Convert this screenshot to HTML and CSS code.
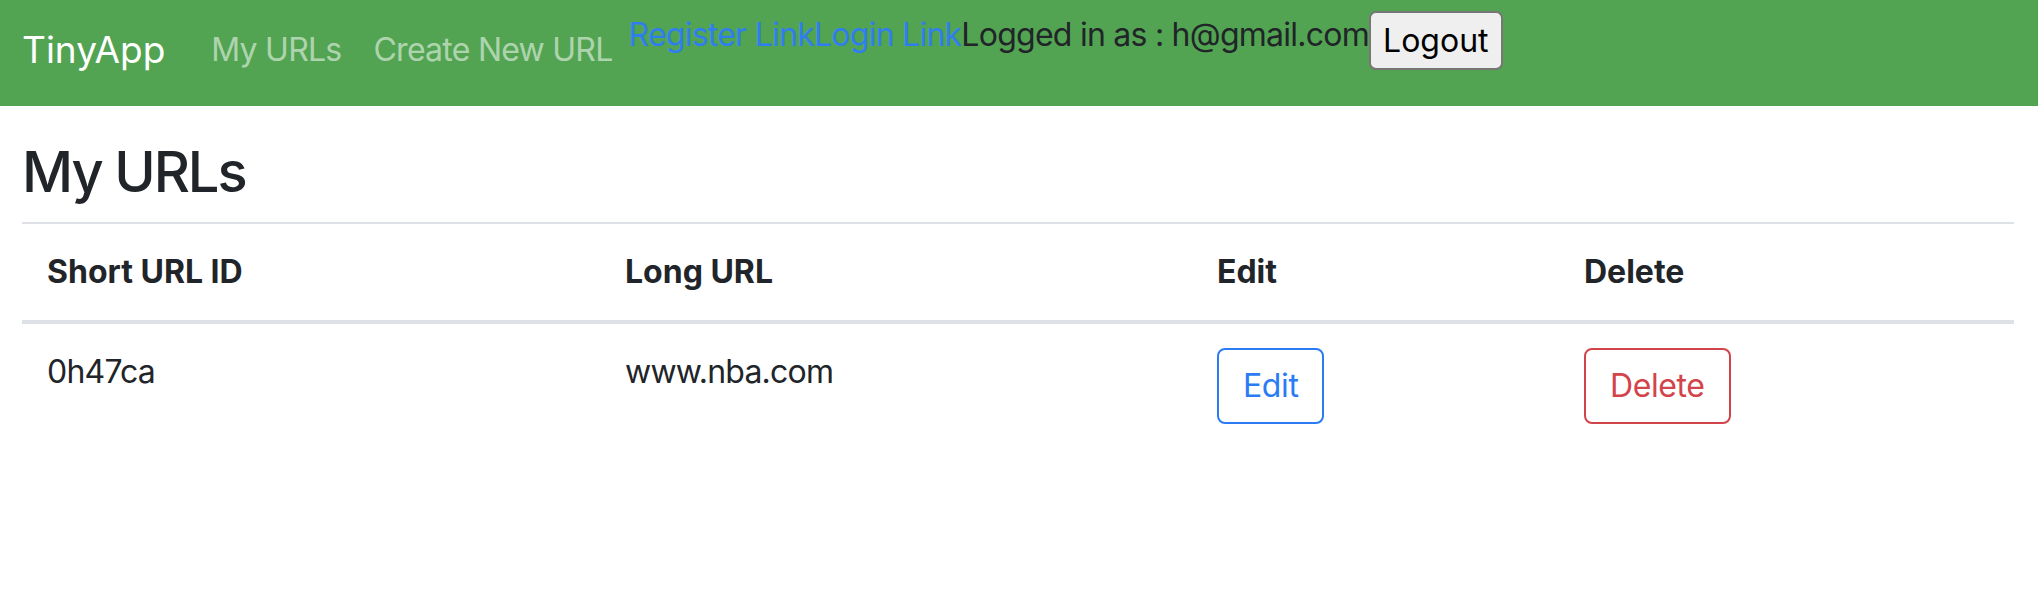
FILE: index.html
```html
<!DOCTYPE html>
<html lang="en">
<head>
<meta charset="utf-8">
<title>TinyApp</title>
<link rel="stylesheet" href="styles.css">
</head>
<body>
<nav class="navbar">
  <a class="brand" href="#">TinyApp</a>
  <ul class="nav-links">
    <li><a class="nav-link" href="#">My URLs</a></li>
    <li><a class="nav-link" href="#">Create New URL</a></li>
  </ul>
  <div class="nav-extra">
    <span class="auth-text"><a class="auth-link" href="#">Register Link</a><a class="auth-link" href="#">Login Link</a>Logged in as : h@gmail.com</span>
    <form class="logout-form"><button class="logout-btn" type="button">Logout</button></form>
  </div>
</nav>
<main class="container">
  <h1 class="title">My URLs</h1>
  <table class="url-table">
    <colgroup>
      <col class="col-short">
      <col class="col-long">
      <col class="col-edit">
      <col class="col-delete">
    </colgroup>
    <thead>
      <tr>
        <th>Short URL ID</th>
        <th>Long URL</th>
        <th>Edit</th>
        <th>Delete</th>
      </tr>
    </thead>
    <tbody>
      <tr>
        <td>0h47ca</td>
        <td>www.nba.com</td>
        <td><a class="btn btn-edit" href="#">Edit</a></td>
        <td><button class="btn btn-delete" type="button">Delete</button></td>
      </tr>
    </tbody>
  </table>
</main>
</body>
</html>
```
FILE: styles.css
```css
* { box-sizing: border-box; }

html, body {
  margin: 0;
  padding: 0;
  background: #ffffff;
}

body {
  font-family: Inter, "Noto Sans", "Liberation Sans", sans-serif;
  font-size: 32px;
  line-height: 1.5;
  color: #212529;
}

.navbar {
  display: flex;
  align-items: center;
  height: 106px;
  padding: 11px 24px 17px 22px;
  background: #52a452;
}

.brand {
  font-size: 37px;
  line-height: 54px;
  color: #ffffff;
  text-decoration: none;
  margin-right: 30px;
  letter-spacing: 0;
}

.nav-links {
  display: flex;
  list-style: none;
  margin: 0;
  padding: 0;
}

.nav-link {
  display: block;
  padding: 0 16px;
  font-size: 32px;
  line-height: 48px;
  letter-spacing: -0.75px;
  color: rgba(255, 255, 255, 0.55);
  text-decoration: none;
}

.nav-extra {
  align-self: flex-start;
  display: flex;
  align-items: flex-start;
}

.auth-text {
  font-size: 32px;
  line-height: 48px;
  letter-spacing: -0.75px;
  color: #212529;
  white-space: nowrap;
}

.auth-link {
  color: #2f7ef0;
  text-decoration: none;
}

.logout-form {
  margin: 0;
}

.logout-btn {
  font-family: Inter, "Noto Sans", "Liberation Sans", sans-serif;
  font-size: 32px;
  line-height: normal;
  color: #000000;
  background: #efefef;
  border: 2px solid #767676;
  border-radius: 7px;
  padding: 8px 12px;
}

.container {
  padding: 33px 24px 0 22px;
}

.title {
  font-size: 56px;
  font-weight: 500;
  line-height: 1.2;
  margin: 0 0 16px 0;
  letter-spacing: -2.1px;
}

.url-table {
  width: 100%;
  border-collapse: collapse;
  table-layout: fixed;
}

.col-short { width: 578px; }
.col-long { width: 592px; }
.col-edit { width: 367px; }
.col-delete { width: 455px; }

.url-table th,
.url-table td {
  text-align: left;
  vertical-align: top;
  padding: 24px 25px;
  border-top: 2px solid #dee2e6;
}

.url-table td {
  letter-spacing: -0.8px;
}

.url-table th {
  font-weight: 700;
  border-bottom: 4px solid #dee2e6;
}

.url-table tbody td {
  border-top: none;
}

.btn {
  display: inline-block;
  font-family: Inter, "Noto Sans", "Liberation Sans", sans-serif;
  font-size: 32px;
  line-height: 48px;
  letter-spacing: -0.4px;
  padding: 12px 24px;
  border: 2px solid;
  border-radius: 8px;
  background: transparent;
  text-decoration: none;
}

.btn-edit {
  color: #2b7cf3;
  border-color: #2b7cf3;
}

.btn-delete {
  color: #d3434a;
  border-color: #d3434a;
}
```
